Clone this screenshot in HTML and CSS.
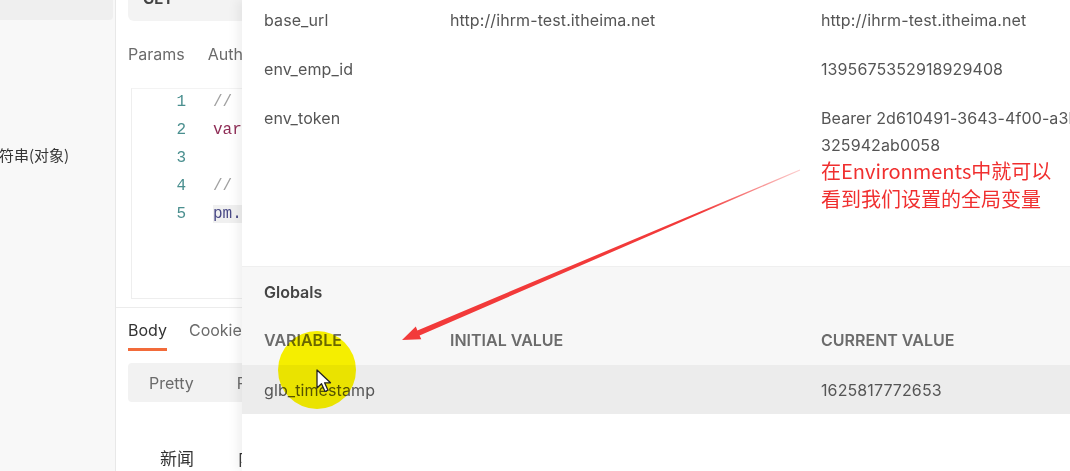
FILE: index.html
```html
<!DOCTYPE html>
<html lang="zh">
<head>
<meta charset="utf-8">
<title>Postman Environments</title>
<link rel="stylesheet" href="styles.css">
</head>
<body>
<div class="app">
  <aside class="sidebar">
    <div class="side-top"></div>
    <div class="side-item">字符串(对象)</div>
  </aside>
  <main class="main">
    <div class="url-box"><span class="method">GET</span></div>
    <nav class="req-tabs"><span>Params</span><span>Authorization</span></nav>
    <div class="editor">
      <div class="gutter"><span>1</span><span>2</span><span>3</span><span>4</span><span>5</span></div>
      <div class="code">
        <div class="cm">// 获取时间戳</div>
        <div><span class="kw">var</span> timestamp = Date.now()</div>
        <div>&nbsp;</div>
        <div class="cm">// 设置全局变量</div>
        <div><span class="sel">pm.</span>globals.set()</div>
      </div>
    </div>
    <div class="divider"></div>
    <nav class="res-tabs"><span class="active">Body</span><span>Cookies</span></nav>
    <div class="format-bar"><span>Pretty</span><span>Raw</span></div>
    <div class="res-body"><span>新闻</span><span>内容</span></div>
  </main>
</div>

<section class="env-panel">
  <div class="env-rows">
    <div class="row"><span>base_url</span><span>http://ihrm-test.itheima.net</span><span>http://ihrm-test.itheima.net</span></div>
    <div class="row"><span>env_emp_id</span><span></span><span>1395675352918929408</span></div>
    <div class="row"><span>env_token</span><span></span><span class="wrap"><span>Bearer 2d610491-3643-4f00-a3b1-</span><span class="l2">325942ab0058</span></span></div>
  </div>
  <div class="globals">
    <div class="g-title">Globals</div>
    <div class="row head"><span>VARIABLE</span><span>INITIAL VALUE</span><span>CURRENT VALUE</span></div>
  </div>
  <div class="row g-row"><span>glb_timestamp</span><span></span><span>1625817772653</span></div>
</section>

<div class="note">在Environments中就可以<br>看到我们设置的全局变量</div>

<svg class="arrow" width="1070" height="471" viewBox="0 0 1070 471">
  <defs>
    <linearGradient id="fade" x1="800" y1="170" x2="402" y2="340" gradientUnits="userSpaceOnUse">
      <stop offset="0" stop-color="#f23a3a" stop-opacity="0.25"/>
      <stop offset="0.25" stop-color="#f23a3a" stop-opacity="1"/>
      <stop offset="1" stop-color="#f23a3a"/>
    </linearGradient>
  </defs>
  <polygon fill="url(#fade)" points="799.8,169.6 800.2,170.4 419.6,335.4 421.3,339.3 402,340 415.8,326.5 417.4,330.4"/>
</svg>

<div class="spot"></div>
<svg class="cursor" width="20" height="25" viewBox="0 0 20 25">
  <path d="M1 1 L1 19 L5.5 14.8 L9 22.5 L12 21.2 L8.6 13.8 L14.5 13.8 Z" fill="#fff" stroke="#222" stroke-width="1.3" stroke-linejoin="round"/>
</svg>
</body>
</html>
```

FILE: styles.css
```css
* { box-sizing: border-box; }

html, body {
  margin: 0;
  padding: 0;
}

body {
  width: 1070px;
  height: 471px;
  overflow: hidden;
  position: relative;
  background: #ffffff;
  font-family: Inter, "Noto Sans CJK SC", sans-serif;
  font-size: 16px;
  color: #505050;
}

.app {
  display: flex;
  height: 471px;
}

/* sidebar */
.sidebar {
  width: 116px;
  flex: none;
  background: #f8f8f8;
  border-right: 1px solid #e8e8e8;
  overflow: hidden;
}
.side-top {
  height: 20px;
  width: 113px;
  background: #efefef;
  border-radius: 0 0 4px 0;
}
.side-item {
  margin-top: 125px;
  margin-left: -16px;
  line-height: 20px;
  white-space: nowrap;
  color: #333;
  font-family: "Noto Sans CJK SC", sans-serif;
  font-size: 15px;
}

/* main request area */
.main {
  flex: 1;
  min-width: 0;
  background: #fff;
  padding: 0 12px;
  overflow: hidden;
  display: flex;
  flex-direction: column;
}
.url-box {
  margin-top: -20px;
  height: 41px;
  width: 600px;
  background: #f3f3f3;
  border-radius: 6px;
  padding: 8px 0 0 15px;
}
.method {
  font-weight: 700;
  font-size: 15px;
  line-height: 20px;
  color: #444;
}
.req-tabs {
  margin-top: 23px;
  display: flex;
  gap: 23px;
  line-height: 20px;
  font-size: 16px;
  color: #6b6b6b;
}
.editor {
  margin-top: 24px;
  margin-left: 3px;
  height: 211px;
  width: 700px;
  border-left: 1px solid #eeeeee;
  border-top: 1px solid #f3f3f3;
  border-bottom: 1px solid #eeeeee;
  display: flex;
  font-family: "Liberation Mono", monospace;
  font-size: 16px;
  line-height: 28px;
}
.gutter {
  width: 54px;
  flex: none;
  display: flex;
  flex-direction: column;
  align-items: flex-end;
  color: #4a8f8f;
  margin-top: -1px;
}
.code {
  padding-left: 27px;
  margin-top: -1px;
  white-space: nowrap;
  color: #333;
}
.cm { color: #a0a0a0; }
.kw { color: #8f2d56; }
.sel { color: #4a4a86; background: #f0f0f0; }

.divider {
  margin: 8px -12px 0;
  height: 1px;
  background: #ececec;
}
.res-tabs {
  display: flex;
  gap: 22px;
  padding-top: 12px;
  font-size: 16px;
  line-height: 20px;
  color: #6b6b6b;
}
.res-tabs span { padding-bottom: 8px; }
.res-tabs .active {
  color: #333;
  border-bottom: 3px solid #f26b3a;
}
.format-bar {
  margin-top: 12px;
  height: 39px;
  width: 600px;
  background: #f2f2f2;
  border-radius: 4px;
  display: flex;
  align-items: center;
  gap: 43px;
  padding-left: 21px;
  font-size: 16px;
  color: #6b6b6b;
}
.res-body {
  padding: 46px 0 0 32px;
  display: flex;
  gap: 44px;
  line-height: 20px;
  font-family: "Noto Sans CJK SC", sans-serif;
  font-size: 17px;
  color: #333;
}

/* environment overlay panel */
.env-panel {
  position: absolute;
  left: 242px;
  top: 0;
  right: 0;
  bottom: 0;
  background: #fff;
  box-shadow: -5px 0 10px rgba(0, 0, 0, 0.06);
  display: flex;
  flex-direction: column;
}
.row {
  display: grid;
  grid-template-columns: 186px 371px 1fr;
  padding: 14px 0 15px 22px;
  line-height: 20px;
  white-space: nowrap;
  color: #555;
  letter-spacing: 0.1px;
}
.env-rows {
  margin-top: -4px;
  height: 270px;
}
.wrap {
  display: flex;
  flex-direction: column;
}
.wrap .l2 { margin-top: 7px; }

.globals {
  background: #f7f7f7;
  border-top: 1px solid #efefef;
}
.g-title {
  padding: 15px 0 0 22px;
  line-height: 20px;
  font-weight: 600;
  color: #444;
}
.row.head {
  padding: 28px 0 15px 22px;
  font-weight: 600;
  color: #6b6b6b;
  letter-spacing: 0;
}
.g-row {
  background: #ececec;
  height: 49px;
  padding-top: 15px;
}

/* annotation */
.note {
  position: absolute;
  left: 821px;
  top: 157px;
  font-family: "Noto Sans CJK SC", sans-serif;
  font-size: 20px;
  line-height: 28px;
  color: #f02f2f;
  white-space: nowrap;
}
.arrow {
  position: absolute;
  left: 0;
  top: 0;
  pointer-events: none;
}
.spot {
  position: absolute;
  left: 278px;
  top: 331px;
  width: 78px;
  height: 78px;
  border-radius: 50%;
  background: #fdf600;
  mix-blend-mode: multiply;
}
.cursor {
  position: absolute;
  left: 316px;
  top: 369px;
}
```
